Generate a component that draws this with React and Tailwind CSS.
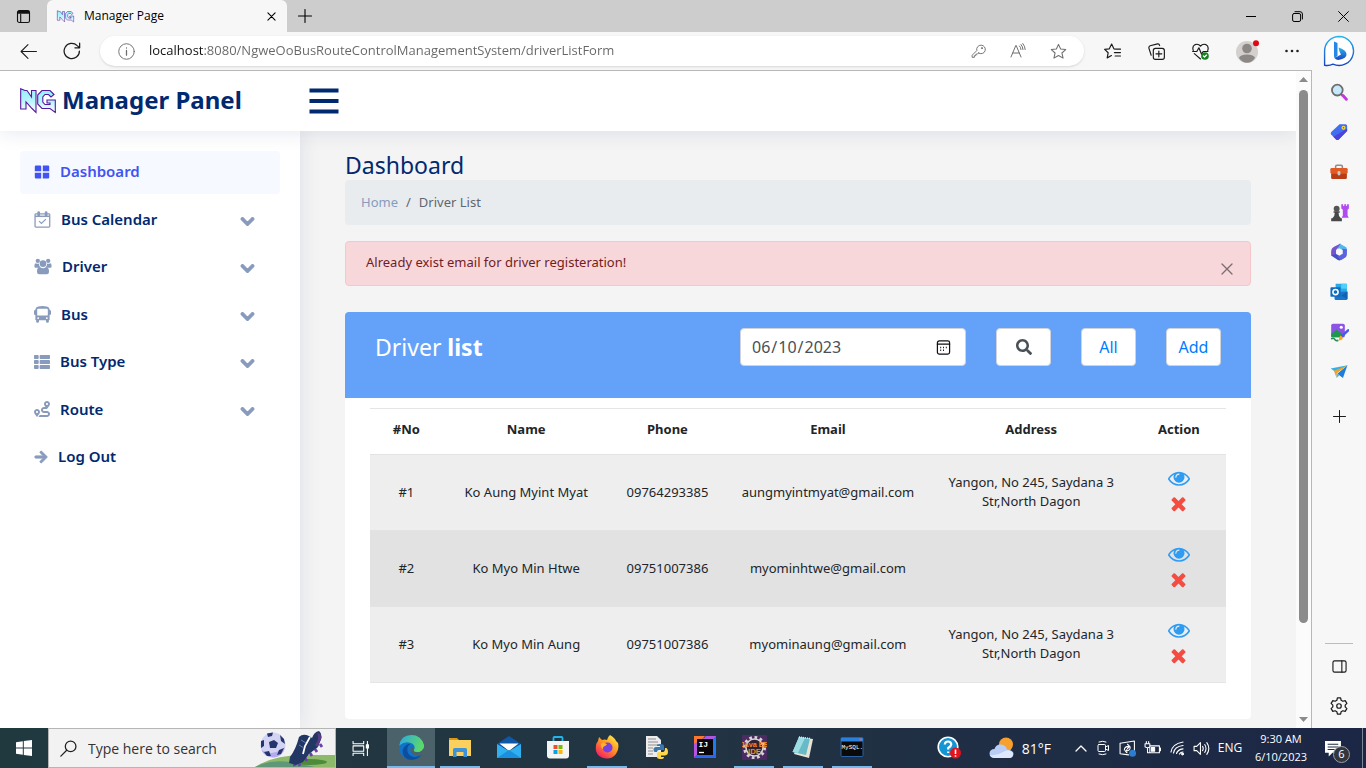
import React from "react";
import { FaThList, FaRoute, FaArrowRight, FaChevronDown, FaSearch } from "react-icons/fa";

const S = ({ size = 16, box = 16, children, w, h, ...rest }) => (
  <svg width={w || size} height={h || size} viewBox={`0 0 ${box} ${box}`} fill="none" aria-hidden="true" className="shrink-0" {...rest}>
    {children}
  </svg>
);

const Line = ({ size = 16, box = 16, d, sw = 1, color = "currentColor", children }) => (
  <S size={size} box={box} stroke={color} strokeWidth={sw} strokeLinecap="round" strokeLinejoin="round">
    {d && <path d={d} />}
    {children}
  </S>
);

function BrandMark({ id, width, height }) {
  return (
    <svg width={width} height={height} viewBox="0 0 36 26" aria-hidden="true" className="shrink-0 overflow-visible">
      <defs>
        <linearGradient id={id} x1="0" y1="0" x2="0" y2="1">
          <stop offset="0" stopColor="#8ff3fb" />
          <stop offset="0.5" stopColor="#b9f4fd" />
          <stop offset="1" stopColor="#ffffff" />
        </linearGradient>
      </defs>
      <path
        d="M.7.7 5 2.5H7L11.500 9V2.500H16V24.500L12 20.500 6 14V21H.7Z"
        fill={`url(#${id})`} stroke="#56189f" strokeWidth="1.1"
      />
      <path
        d="M34 6.500 30 2.500H22L17.700 7V16L22 20.500H30L35.300 24.500V12H27V15H30V16.500H25L22.800 14V9L25 6.500H28.500L31 9Z"
        fill={`url(#${id})`} stroke="#56189f" strokeWidth="1.1"
      />
    </svg>
  );
}

const STAR = "M8 1.3 L10 5.7 L14.8 6.2 L11.2 9.4 L12.3 14.2 L8 11.7 L3.7 14.2 L4.8 9.4 L1.2 6.2 L6 5.7 Z";

function TitleBar() {
  return (
    <header className="flex h-8 shrink-0 items-stretch bg-[#cdcdcd] text-black">
      <button aria-label="Tab actions" className="flex w-[47px] items-center justify-center">
        <S size={15}>
          <rect x="1.6" y="1.6" width="12.8" height="12.8" rx="2" stroke="#111" strokeWidth="1.2" />
          <path d="M1.6 5V3.4Q1.6 1.6 3.4 1.6H12.6Q14.4 1.6 14.4 3.4V5Z" fill="#111" />
          <path d="M5 5V14" stroke="#111" strokeWidth="1.2" />
        </S>
      </button>
      <div className="flex w-60 items-center rounded-t-md bg-[#f7f7f7] pr-2 pl-2.5">
        <BrandMark id="tabMark" width={17} height={15} />
        <span className="ml-2.5 flex-1 text-[12px]">Manager Page</span>
        <button aria-label="Close tab" className="flex size-4 items-center justify-center">
          <Line size={9} box={10} d="M1 1 9 9 M9 1 1 9" sw={1.2} />
        </button>
      </div>
      <button aria-label="New tab" className="flex w-9 items-center justify-center">
        <Line size={14} box={14} d="M7 0.5V13.5 M0.5 7H13.5" sw={1.1} />
      </button>
      <div className="flex-1" />
      <button aria-label="Minimize" className="flex w-[46px] items-center justify-center">
        <Line size={10} box={10} d="M0 5.5H10" />
      </button>
      <button aria-label="Restore" className="flex w-[46px] items-center justify-center">
        <Line size={11} box={11}>
          <rect x="0.6" y="2.5" width="8" height="8" rx="1.5" />
          <path d="M3 .7H8Q10.4.7 10.4 3V8" />
        </Line>
      </button>
      <button aria-label="Close window" className="flex w-[46px] items-center justify-center">
        <Line size={11} box={11} d="M.6.6 10.4 10.4 M10.4.6.6 10.4" />
      </button>
    </header>
  );
}

function BingIcon() {
  return (
    <S size={32} box={32}>
      <defs>
        <linearGradient id="bing" x1="0" y1="0" x2="0" y2="1">
          <stop offset="0" stopColor="#29b6ea" />
          <stop offset="1" stopColor="#1846c7" />
        </linearGradient>
      </defs>
      <path d="M16 1.5A14.5 14.5 0 1 1 10 29.2Q6 31 1.6 30.2V16A14.5 14.5 0 0 1 16 1.5Z" fill="#fff" stroke="url(#bing)" strokeWidth="1.4" />
      <path d="M11 6.5 14.5 8V20.5L12 23.5Q11 22.5 11 21Z" fill="#2588e9" />
      <path d="M15.5 12.5Q23 14.5 23.5 19T15.5 25Q12.8 25 11.6 23L18 19.6 16.6 16.8Z" fill="url(#bing)" />
    </S>
  );
}

function Toolbar() {
  return (
    <div className="flex h-[38px] shrink-0 items-center bg-[#f7f7f7] text-[#1b1b1b]">
      <button aria-label="Back" className="flex w-14 items-center justify-center">
        <Line size={17} d="M15.5 8H1 M7.5 1.5 1 8 7.5 14.5" />
      </button>
      <button aria-label="Refresh" className="flex w-8 items-center justify-center">
        <Line size={18} d="M14.6 8A6.8 6.8 0 1 1 12.6 3.2L14.8 5.2 M14.8 1V5.2H10.6" sw={1.1} />
      </button>
      <div className="ml-3 flex h-[30px] flex-1 items-center rounded-full bg-white pr-1.5 pl-4.5 text-[#6e6e6e] shadow-sm">
        <Line size={17} sw={0.9}>
          <circle cx="8" cy="8" r="7.3" />
          <path d="M8 7V11.5 M8 4.6V4.8" strokeWidth="1.2" />
        </Line>
        <input
          aria-label="Address"
          defaultValue="localhost:8080/NgweOoBusRouteControlManagementSystem/driverListForm"
          className="ml-3.5 min-w-0 flex-1 bg-[linear-gradient(90deg,#111_55px,#666_55px)] bg-clip-text text-[13px] text-transparent outline-none"
        />
        <button aria-label="Passwords" className="flex w-10 justify-center">
          <Line size={15}>
            <path d="M8 9.6 6.8 10.8H5.2V12.4H3.6V14.2H1.2V12L6.2 7A4.6 4.6 0 1 1 8 9.6Z" />
            <circle cx="11.6" cy="4.4" r=".6" />
          </Line>
        </button>
        <button aria-label="Read aloud" className="flex w-10 justify-center">
          <Line size={16} d="M1 14 5.8 2.5H6.2L11 14 M2.8 10H9.2 M9.5 3Q11 4.5 11 6.5 M11 1.5Q13 3.8 13 6.5 M12.8.5Q15.2 3.4 15.2 6.5" />
        </button>
        <button aria-label="Add to favorites" className="flex w-10 justify-center">
          <Line size={17} d={STAR} />
        </button>
      </div>
      <div className="flex items-center pl-1.5">
        <button aria-label="Favorites" className="flex w-11 justify-center">
          <Line size={17} d="M11.5 5.8 9.3 5.5 7.2 1 5 5.5.6 6 3.9 9.2 3 14 7 11.8 M10.5 5.8H15.5 M9.8 9H15.5 M10.5 12.2H15.5" sw={1.1} />
        </button>
        <button aria-label="Collections" className="flex w-11 justify-center">
          <Line size={17} sw={1.1}>
            <rect x="5" y="5" width="10.4" height="10.4" rx="2" />
            <path d="M10.2 7.5V13 M7.5 10.2H13 M3 11.5 .9 5Q.5 3.2 2 2.6L9 .8Q10.6.6 11 2.4" />
          </Line>
        </button>
        <button aria-label="Browser essentials" className="flex w-11 justify-center">
          <Line size={17} d="M1.2 7Q-.2 3 3 1.5 6 .4 8 3 10 .4 13 1.5 16.2 3 14.8 7 M.6 8H4.5L6.5 4.5 9 10.5 10.5 8H15 M2.2 10 8 15" sw={1.1}>
            <circle cx="12.2" cy="12.2" r="3.6" fill="#16821d" stroke="none" />
            <path d="M10.8 12.2 11.8 13.2 13.7 11.3" stroke="#fff" />
          </Line>
        </button>
        <button aria-label="Profile" className="flex w-[50px] justify-center">
          <S size={24} box={24}>
            <circle cx="12" cy="13" r="11" fill="#d3d0cd" />
            <circle cx="12" cy="9.5" r="4.8" fill="#8c8885" />
            <path d="M4 19Q5 15.5 12 15.5T20 19Q17 23.5 12 23.8 7 23.5 4 19Z" fill="#8c8885" />
            <circle cx="21" cy="4.3" r="3" fill="#e30613" />
          </S>
        </button>
        <button aria-label="Settings and more" className="flex w-10 justify-center">
          <S size={14} box={14}>
            <circle cx="1.5" cy="7" r="1.3" fill="#222" />
            <circle cx="7" cy="7" r="1.3" fill="#222" />
            <circle cx="12.5" cy="7" r="1.3" fill="#222" />
          </S>
        </button>
        <button aria-label="Bing chat" className="flex w-[54px] justify-center">
          <BingIcon />
        </button>
      </div>
    </div>
  );
}

const EDGE_TOOLS = [
  ["Search", (
    <S size={18}>
      <circle cx="6.5" cy="6.3" r="4.8" fill="#c5e9fb" stroke="#6d6d6d" strokeWidth="1.6" />
      <path d="M10 10 11.5 11.5" stroke="#666" strokeWidth="1.8" />
      <path d="M11.5 11.2 14.5 14.5" stroke="#c239e0" strokeWidth="2.6" strokeLinecap="round" />
    </S>
  )],
  ["Shopping", (
    <S size={18}>
      <path d="M8.5 1H13.8Q15.2 1 15.2 2.4V7L7.8 14.6Q6.6 15.5 5.4 14.6L1 10.2Q.2 9 1.1 8Z" fill="#416ff0" />
      <path d="M15.2 5V7L7.8 14.6Q6.6 15.5 5.4 14.6L3 12.2Z" fill="#4a43dc" />
      <circle cx="12" cy="4.2" r="1.8" fill="#f8d64e" /><circle cx="12" cy="4.2" r=".7" fill="#5b5bd0" />
    </S>
  )],
  ["Tools", (
    <S size={18}>
      <path d="M5 5V3.2Q5 2 6.2 2H9.8Q11 2 11 3.2V5" stroke="#8d8d8d" strokeWidth="1.4" />
      <rect x=".3" y="4.4" width="15.4" height="5" rx="1.2" fill="#e15a23" />
      <path d="M1 9H15V13Q15 14.3 13.8 14.3H2.2Q1 14.3 1 13Z" fill="#b93d14" />
      <rect x="6.7" y="7.2" width="2.6" height="3.8" rx="1.2" fill="#c9c9c9" />
    </S>
  )],
  ["Games", (
    <S size={19}>
      <path d="M9.5 1H11V2.5H12V1H13.6V2.5H14.4V1H15.9V4.6L14.8 5.6V10.5L15.8 12.5H9.8L10.8 10.5V5.6L9.5 4.6Z" fill="#b14bf0" />
      <circle cx="5.6" cy="4.8" r="2.5" fill="#555" />
      <path d="M3 7H8.2V8.3H7.2Q7 11 9.2 12.8H10V15.4H1V12.8H2Q4.200 11 4 8.300H3Z" fill="#484848" />
    </S>
  )],
  ["Microsoft 365", (
    <S size={18}>
      <path d="M8.5.5 14 3.5Q15 4 15 5.5V9L11 6.2 6 4.6Z" fill="#53b7ef" />
      <path d="M9.5.5 4 3.2Q1 4.800 1 7.500V11L5.500 12.500V6.500Z" fill="#7654cf" />
      <path d="M1 11 7 15.200Q8.200 16 9.500 15.200L14 12.500 10 9.500 5 9.800Z" fill="#454fc2" />
      <path d="M15 5.500V10.500Q15 12 13.500 12.800L9.500 15.300 6.500 12 11 9.500V5Z" fill="#5b62df" />
      <path d="M5.500 6.200 8.500 4.600 11.200 6.500V9.600L8.300 11.400 5.500 9.800Z" fill="#f7f7f7" />
    </S>
  )],
  ["Outlook", (
    <S size={18}>
      <path d="M5 .6H14Q15 .6 15 1.600V9H5Z" fill="#29a8ea" />
      <path d="M10 .6H15V5H10Z" fill="#52d0fb" />
      <path d="M4 8 15.500 7.500V14Q15.500 15 14.500 15H5Q4 15 4 14Z" fill="#1a74cb" />
      <path d="M10 11 15.500 7.500V14.500Z" fill="#1262ae" />
      <rect x=".4" y="3.700" width="9" height="8.600" rx=".8" fill="#0d6cbf" />
      <circle cx="4.900" cy="8" r="2.300" stroke="#fff" strokeWidth="1.400" />
    </S>
  )],
  ["Image creator", (
    <S size={19}>
      <rect x="1" y=".6" width="11.500" height="11.500" rx="1.500" fill="#8e53e5" />
      <circle cx="9.500" cy="3.600" r="1.300" fill="#fff" />
      <path d="M1 9 5.500 5.500 12 10.500V12H1Z" fill="#219653" />
      <path d="M1 13.500Q3 12 4 13.800T7 14.500" stroke="#23905a" strokeWidth="1.400" />
      <path d="M15.300 6.200 10 11" stroke="#4b5be6" strokeWidth="2.200" strokeLinecap="round" />
      <path d="M9 10.500 11.200 12.500Q10 15 7 14.800 8 13.500 7.600 12Z" fill="#f1a91e" />
    </S>
  )],
  ["Drop", (
    <S size={18}>
      <path d="M.6 4.800 15.500 2 5.500 8.500Z" fill="#2fb1ee" />
      <path d="M15.500 2 11.500 13.300 6.500 9.500Z" fill="#1c7ddb" />
      <path d="M3.500 6.800 15.500 2 6 9 5.800 13Z" fill="#f2a01d" />
      <path d="M6 9.200 8.500 10.800 5.800 13.300Z" fill="#3ec3f7" />
    </S>
  )],
];

function EdgeSidebar() {
  return (
    <aside aria-label="Browser sidebar" className="flex w-[55px] shrink-0 flex-col items-center border-l border-[#b8b8b8] bg-[#f7f7f7] pt-0.5 text-[#1b1b1b]">
      {EDGE_TOOLS.map(([name, icon]) => (
        <button key={name} aria-label={name} className="flex h-10 w-full items-center justify-center">{icon}</button>
      ))}
      <button aria-label="Customize sidebar" className="mt-1 flex h-10 w-full items-center justify-center">
        <Line size={13} box={13} d="M6.500.5V12.500 M.5 6.500H12.500" />
      </button>
      <div className="flex-1" />
      <div className="h-px w-7 bg-[#bcbcbc]" />
      <button aria-label="Toggle sidebar" className="mt-0.5 flex h-10 w-full items-center justify-center">
        <Line size={15} sw={1.200}>
          <rect x="1" y="2" width="14" height="12" rx="1.800" />
          <path d="M10.500 2V14" />
        </Line>
      </button>
      <button aria-label="Sidebar settings" className="mb-0.5 flex h-10 w-full items-center justify-center">
        <Line size={18} sw={1.100}>
          <circle cx="8" cy="8" r="2" />
          <path d="M6.600.8H9.400L9.900 2.900 11.500 3.800 13.500 3.200 15 5.700 13.500 7.200V8.800L15 10.300 13.500 12.800 11.500 12.200 9.900 13.100 9.400 15.200H6.600L6.100 13.100 4.500 12.200 2.500 12.800 1 10.300 2.500 8.800V7.200L1 5.700 2.500 3.200 4.500 3.800 6.100 2.900Z" />
        </Line>
      </button>
    </aside>
  );
}

const NAV = [
  { label: "Dashboard", active: true, icon: (
    <S size={16}><path d="M2 1.500H6.200Q7.200 1.500 7.200 2.500V7.200H.8V2.500Q.8 1.500 2 1.500ZM8.800 1.500H14.200Q15.200 1.500 15.200 2.500V7.200H8.800ZM.8 8.700H7.200V14.500H2Q.8 14.500.8 13.500ZM8.800 8.700H15.200V13.500Q15.200 14.500 14.200 14.500H8.800Z" fill="currentColor" /></S>
  ) },
  { label: "Bus Calendar", arrow: true, icon: (
    <S size={17} stroke="currentColor">
      <rect x="1" y="2.800" width="13.800" height="12.400" rx=".8" strokeWidth="1.200" />
      <path d="M1 5H14.800" strokeWidth="1.400" />
      <path d="M4.400 1.500V4 M11.400 1.500V4" strokeWidth="2.600" strokeLinecap="round" />
      <path d="M4.800 9.500 7 11.700 11.200 7.600" strokeWidth="1.100" />
    </S>
  ) },
  { label: "Driver", arrow: true, icon: (
    <S w={18} h={17} box={18}>
      <g fill="currentColor">
        <circle cx="3.500" cy="3" r="2.300" /><circle cx="14.500" cy="3" r="2.300" /><circle cx="9" cy="6" r="3.500" />
        <path d="M0 9.500V7.500Q0 5.500 1.500 5.500 3 6.500 4.700 5.700 4.500 8 6 9.500L4.500 10.300H1Q0 10.300 0 9.500ZM18 9.500V7.500Q18 5.500 16.500 5.500 15 6.500 13.300 5.700 13.500 8 12 9.500L13.500 10.300H17Q18 10.300 18 9.500Z" />
        <path d="M2.600 14.500Q2.600 9.500 5.800 9.500 9 12 12.200 9.500 15.400 9.500 15.400 14.500 15.400 17.200 13 17.200H5Q2.600 17.200 2.600 14.500Z" />
      </g>
    </S>
  ) },
  { label: "Bus", arrow: true, icon: (
    <S size={17}>
      <path fillRule="evenodd" fill="currentColor" d="M4 .4Q8-.4 12 .4 14.500.800 14.700 3V3.800Q16 3.800 16 5V7.500Q16 8.500 14.700 8.500V13.200H14V14.800Q14 15.800 12.600 15.800T11.300 14.800V13.500H4.700V14.800Q4.700 15.800 3.400 15.800T2 14.800V13.200H1.300V8.500Q0 8.500 0 7.500V5Q0 3.800 1.300 3.800V3Q1.500.800 4 .4ZM3.800 2.600Q3 2.600 3 3.500V8.200Q3 9 3.800 9H12.200Q13 9 13 8.200V3.500Q13 2.600 12.200 2.600ZM3.900 10.500A.9.9 0 1 0 3.900 12.300.9.9 0 0 0 3.900 10.500ZM12.100 10.500A.9.900 0 1 0 12.100 12.300.9.900 0 0 0 12.100 10.500Z" />
    </S>
  ) },
  { label: "Bus Type", arrow: true, icon: <FaThList size={16} aria-hidden="true" /> },
  { label: "Route", arrow: true, icon: <FaRoute size={16} aria-hidden="true" /> },
  { label: "Log Out", icon: <FaArrowRight size={14} stroke="currentColor" strokeWidth={36} aria-hidden="true" /> },
];

function Sidebar() {
  return (
    <nav aria-label="Main" className="relative z-0 w-[300px] shrink-0 bg-white px-5 py-5 shadow-[0_0_20px_rgba(1,41,112,0.1)]">
      <ul className="flex h-[328px] flex-col justify-between text-[15px] font-semibold">
        {NAV.map((item) => (
          <li key={item.label}>
            <a
              href={"#" + item.label.replace(" ", "-").toLowerCase()}
              className={
                item.active
                  ? "flex h-[43px] items-center rounded bg-[#f6f9ff] pr-[25px] pb-0.5 pl-3.5 text-[#4154f1]"
                  : "flex h-[43px] items-center rounded pr-[25px] pb-0.5 pl-3.5 text-[#012970]"
              }
            >
              <span className={item.active ? "mr-2.5" : "mr-2.5 text-[#899bbd]"}>{item.icon}</span>
              <span className="flex-1">{item.label}</span>
              {item.arrow && <FaChevronDown size={15} stroke="currentColor" strokeWidth={44} className="mt-1 text-[#899bbd]" aria-hidden="true" />}
            </a>
          </li>
        ))}
      </ul>
    </nav>
  );
}

const EYE =
  "M1664 960q-152-236-381-353 61 104 61 225 0 185-131.500 316.500t-316.500 131.500-316.500-131.500-131.500-316.500q0-121 61-225-229 117-381 353 133 205 333.500 326.500t434.500 121.500 434.500-121.500 333.500-326.500zm-720-384q0-20-14-34t-34-14q-125 0-214.500 89.500t-89.500 214.500q0 20 14 34t34 14 34-14 14-34q0-86 61-147t147-61q20 0 34-14t14-34zm848 384q0 34-20 69-140 230-376.500 368.500t-499.500 138.500-499.500-139-376.500-368q-20-35-20-69t20-69q140-229 376.500-368t499.500-139 499.500 139 376.500 368q20 35 20 69z";
const TIMES =
  "M1490 1322q0 40-28 68l-136 136q-28 28-68 28t-68-28l-294-294-294 294q-28 28-68 28t-68-28l-136-136q-28-28-28-68t28-68l294-294-294-294q-28-28-28-68t28-68l136-136q28-28 68-28t68 28l294 294 294-294q28-28 68-28t68 28l136 136q28 28 28 68t-28 68l-294 294 294 294q28 28 28 68z";

const DRIVERS = [
  { no: "#1", name: "Ko Aung Myint Myat", phone: "09764293385", email: "aungmyintmyat@gmail.com", address: "Yangon, No 245, Saydana 3 Str,North Dagon" },
  { no: "#2", name: "Ko Myo Min Htwe", phone: "09751007386", email: "myominhtwe@gmail.com", address: "" },
  { no: "#3", name: "Ko Myo Min Aung", phone: "09751007386", email: "myominaung@gmail.com", address: "Yangon, No 245, Saydana 3 Str,North Dagon" },
];

const BTN = "flex h-[38px] w-[55px] items-center justify-center rounded border border-[#ced4da] bg-white text-[16px] text-[#007bff]";

function DriverCard() {
  return (
    <section className="mt-[26px] rounded bg-white pb-9">
      <div className="flex h-[86px] items-start rounded-t bg-[#64a1f9] px-[30px] pt-4">
        <h2 className="flex-1 text-[23px] leading-[38px] text-white">
          Driver <b>list</b>
        </h2>
        <div className="flex gap-[30px]">
          <div className="relative w-[226px]">
            <input
              type="date"
              aria-label="Date"
              defaultValue="2023-06-10"
              className="h-[38px] w-full rounded border border-[#ced4da] bg-white pr-3 pl-2.5 text-[16px] text-[#495057] [&::-webkit-calendar-picker-indicator]:opacity-0"
            />
            <span className="pointer-events-none absolute top-3 right-[15px]">
              <Line size={15} color="#111" sw={1.3}>
                <rect x="1.500" y="1" width="13" height="14" rx="2" />
                <path d="M1.500 4.500H14.500" />
                <path d="M4.500 8H5.500 M7.500 8H8.500 M10.500 8H11.500 M4.500 11H5.500 M7.500 11H8.500" strokeWidth="1.700" strokeLinecap="butt" />
              </Line>
            </span>
          </div>
          <button aria-label="Search drivers" className={BTN}>
            <FaSearch size={16} className="text-[#495057]" aria-hidden="true" />
          </button>
          <button className={BTN}>All</button>
          <button className={BTN}>Add</button>
        </div>
      </div>
      <div className="px-[25px] pt-2.5">
        <table className="w-full table-fixed border-y border-[#e5e5e5] text-center text-[13px] leading-[19px] text-[#212529]">
          <colgroup>
            <col className="w-[8.500%]" />
            <col className="w-[19.500%]" />
            <col className="w-[13.500%]" />
            <col className="w-[24%]" />
            <col className="w-[23.500%]" />
            <col className="w-[11%]" />
          </colgroup>
          <thead>
            <tr className="h-[46px] font-bold">
              {["#No", "Name", "Phone", "Email", "Address", "Action"].map((h) => (
                <th key={h} className="pb-1">{h}</th>
              ))}
            </tr>
          </thead>
          <tbody>
            {DRIVERS.map((d) => (
              <tr key={d.no} className="h-[76px] border-t border-[#e3e3e3] bg-[#eeeeee] even:bg-[#e2e2e2]">
                <td>{d.no}</td>
                <td>{d.name}</td>
                <td>{d.phone}</td>
                <td>{d.email}</td>
                <td className="px-3 pb-0.5">{d.address}</td>
                <td className="pb-1">
                  <div className="flex flex-col items-center gap-1">
                    <button aria-label={"View " + d.name} className="text-[#2f9cf3]">
                      <S size={22} box={1792}><path d={EYE} fill="currentColor" /></S>
                    </button>
                    <button aria-label={"Delete " + d.name} className="text-[#f44c40]">
                      <S size={21} box={1792}><path d={TIMES} fill="currentColor" /></S>
                    </button>
                  </div>
                </td>
              </tr>
            ))}
          </tbody>
        </table>
      </div>
    </section>
  );
}

function Page() {
  return (
    <div className="flex min-w-0 flex-1 flex-col overflow-hidden bg-[#f4f4f4] font-['Noto_Sans',sans-serif]">
      <div className="relative z-10 flex h-[60px] shrink-0 items-center bg-white pl-5 text-[#012970] shadow-[0_2px_20px_rgba(1,41,112,0.1)]">
        <a href="#home" className="flex w-[289px] items-center gap-1.5">
          <BrandMark id="pageMark" width={36} height={26} />
          <span className="pb-0.5 text-[24px] font-bold">Manager Panel</span>
        </a>
        <button aria-label="Toggle menu">
          <S size={30} box={30}>
            <path d="M2.500 4.500H27.500 M2.500 15H27.500 M2.500 25.500H27.500" stroke="currentColor" strokeWidth="4" strokeLinecap="square" />
          </S>
        </button>
      </div>
      <div className="flex min-h-0 flex-1">
        <Sidebar />
        <main className="min-w-0 flex-1 px-[45px] pt-5">
          <h1 className="text-[23px] leading-[29px] text-[#012970]">Dashboard</h1>
          <ol className="flex h-[45px] items-center gap-2 rounded bg-[#e8ecef] px-4 text-[13px] text-[#5f6770]">
            <li><a href="#home" className="text-[#899bbd]">Home</a></li>
            <li aria-hidden="true">/</li>
            <li>Driver List</li>
          </ol>
          <div role="alert" className="mt-4 flex h-[45px] items-center justify-between rounded border border-[#f5c6cb] bg-[#f8d7da] pr-[15px] pb-0.5 pl-5 text-[13px] text-[#721c24]">
            <span>Already exist email for driver registeration!</span>
            <button aria-label="Dismiss" className="mt-3 flex size-4 items-center justify-center text-[#7b6c6d]">
              <Line size={12} box={12} d="M1 1 11 11 M11 1 1 11" sw={1.300} />
            </button>
          </div>
          <DriverCard />
        </main>
      </div>
    </div>
  );
}

function Scrollbar() {
  return (
    <div aria-hidden="true" className="flex w-[15px] shrink-0 flex-col items-center bg-[#fbfbfb] py-1">
      <S size={9} box={9}><path d="M4.500 2 9 7H0Z" fill="#8b8b8b" /></S>
      <div className="mt-1.5 w-[9px] flex-[534] rounded-full bg-[#8b8b8b]" />
      <div className="flex-[92]" />
      <S size={9} box={9}><path d="M4.500 7 9 2H0Z" fill="#8b8b8b" /></S>
    </div>
  );
}

const APPS = [
  { name: "Microsoft Edge", active: true, open: true, icon: (
    <S size={25} box={24}>
      <defs>
        <linearGradient id="edgeTop" x1="0" y1="0" x2="1" y2="0.3">
          <stop offset="0" stopColor="#2aa8e6" /><stop offset="1" stopColor="#5bd86a" />
        </linearGradient>
      </defs>
      <circle cx="12" cy="12" r="12" fill="#1272c8" />
      <path d="M.2 10Q2 0 12 0 21 0 24 9.500 24.500 15 19 16.500 14 17 14 14.500 16.500 11.500 13 8.500 7 5 .2 10Z" fill="url(#edgeTop)" />
      <path d="M8 13Q7.500 20 14.500 21 19 21.500 22 18.500 18 24 12 24 3 23 3.500 15 5 9 11 8.500 8.500 10 8 13Z" fill="#0c4f9e" />
      <path d="M14 14.500Q14 17 19 16.500 22 16 23.500 13L26 16 22 19Q16 21 12.500 18 9.500 14.500 12 11 15 12 14 14.500Z" fill="#4a626c" />
    </S>
  ) },
  { name: "File Explorer", open: true, icon: (
    <S size={24} box={24}>
      <path d="M1 3H9L11 5H1Z" fill="#d99a17" />
      <path d="M1 5H23V21H1Z" fill="#fbd05c" />
      <path d="M5 14.500Q5 13 6.500 13H17.500Q19 13 19 14.500V22H15.500V17H8.500V22H5Z" fill="#3d93d8" />
    </S>
  ) },
  { name: "Mail", icon: (
    <S size={24} box={24}>
      <path d="M0 9 12 1 24 9V12H0Z" fill="#0f58a8" />
      <path d="M2.500 8.500H21.500L12 16Z" fill="#fff" />
      <path d="M0 9 12 16 24 9V23H0Z" fill="#30b0f0" /><path d="M0 23 12 15 24 23Z" fill="#1a8fdd" />
    </S>
  ) },
  { name: "Microsoft Store", icon: (
    <S size={24} box={24}>
      <path d="M7.500 6V3Q7.500 2 8.500 2H15.500Q16.500 2 16.500 3V6" stroke="#25b4ea" strokeWidth="1.800" />
      <path d="M1 6H23V20.500Q23 23.500 20 23.500H4Q1 23.500 1 20.500Z" fill="#f4f4f4" />
      <path d="M7.500 10H11.500V14H7.500Z" fill="#f04e28" /><path d="M12.500 10H16.500V14H12.500Z" fill="#7cb902" />
      <path d="M7.500 15H11.500V19H7.500Z" fill="#05a3ec" /><path d="M12.500 15H16.500V19H12.500Z" fill="#fdb702" />
    </S>
  ) },
  { name: "Firefox", open: true, icon: (
    <S size={24} box={24}>
      <defs>
        <linearGradient id="fox" x1="0.900" y1="0" x2="0.200" y2="1">
          <stop offset="0" stopColor="#fff14a" /><stop offset="0.450" stopColor="#ff9a1f" /><stop offset="1" stopColor="#f5156b" />
        </linearGradient>
      </defs>
      <path d="M15 0Q20 3 21 6L23 8Q24.500 14 21 19 17 24 11 23.500 3 23 1 16 0 9 3 6L4 2 7 5Q10 4 12 5 13 1.500 15 0Z" fill="url(#fox)" />
      <circle cx="12.500" cy="12.500" r="5" fill="#7a3fe0" />
      <path d="M6 9Q9 6.500 12 9.500L10 11Q7 12 8.500 14.500 5 12 6 9Z" fill="#ffb32b" />
    </S>
  ) },
  { name: "Python file", icon: (
    <S size={24} box={24}>
      <path d="M2 1H13L17 5V22H2Z" fill="#ededed" />
      <path d="M4 4H12 M4 7H14 M4 10H14 M4 13H9 M4 16H9 M4 19H9" stroke="#8d8d8d" />
      <path d="M16 9Q20 9 20 11V15H15Q13 15 13 17H11Q9.500 17 9.500 14.500T12 12H16V11H13V10Q13 9 16 9Z" fill="#3b77ab" />
      <path d="M17 24Q13 24 13 22V18.500Q13 17 15 17H19Q21 17 21 13H22.500Q24 14 24 17T21 20.500H17V22H20Q20 24 17 24Z" fill="#ffd748" />
    </S>
  ) },
  { name: "IntelliJ IDEA", icon: (
    <S size={24} box={24}>
      <path d="M1 1H12L1 14Z" fill="#f9772e" /><path d="M12 1H23V23H12Z" fill="#1d7bf0" />
      <path d="M1 9 14 1H23L1 23Z" fill="#b454e0" /><path d="M1 23 12 11 23 20V23Z" fill="#2b67f0" />
      <rect x="4" y="4" width="16" height="16" fill="#090509" />
      <text x="5.500" y="12" fontSize="8" fontWeight="700" fill="#fff" fontFamily="Liberation Mono, monospace">IJ</text>
      <path d="M6 17.500H11" stroke="#fff" strokeWidth="1.300" />
    </S>
  ) },
  { name: "Java EE IDE", open: true, icon: (
    <S size={25} box={24}>
      <rect width="24" height="24" rx="1" fill="#4a2c63" />
      <circle cx="12" cy="12" r="9.800" stroke="#d9d5d5" strokeWidth="2.600" strokeDasharray="2.600 2.500" />
      <circle cx="12" cy="12" r="8.200" stroke="#d9d5d5" strokeWidth="1.500" fill="#312331" />
      <text x="12" y="11.500" textAnchor="middle" fontSize="7" fontWeight="700" fill="#f08b2c" fontFamily="Liberation Sans, sans-serif">Java EE</text>
      <text x="12" y="18.500" textAnchor="middle" fontSize="7.500" fontWeight="700" fill="#f08b2c" fontFamily="Liberation Sans, sans-serif">IDE</text>
    </S>
  ) },
  { name: "Notepad", open: true, icon: (
    <S size={24} box={24}>
      <path d="M8 2 22 4 18 23 3 19Z" fill="#e6e2d5" />
      <path d="M8 2 19 3.500 15 20 1.500 17Z" fill="#67bac6" />
      <path d="M8 2 14 3 7 18 1.500 17Z" fill="#9bdde2" />
      <path d="M8 2 19 3.500" stroke="#d7f0f3" strokeWidth="1.600" strokeDasharray="1 1" />
    </S>
  ) },
  { name: "MySQL command line", open: true, icon: (
    <S size={24} box={24}>
      <rect x="1" y="2.500" width="22" height="19" rx="1" fill="#0a0a0a" stroke="#2b62a5" strokeWidth="1" />
      <path d="M1 3H23V6.500H1Z" fill="#2a80dd" /><path d="M19.500 3.500H22V5.500H19.500Z" fill="#e36251" />
      <text x="1.500" y="13.500" fontSize="6" fill="#fff" fontFamily="Liberation Mono, monospace">MySQL.</text>
    </S>
  ) },
];

function SportsArt() {
  return (
    <svg width="80" height="38" viewBox="0 0 80 38" aria-hidden="true" className="shrink-0">
      <path d="M0 38Q18 26 50 26T80 26V38Z" fill="#8cb96a" />
      <path d="M0 38Q15 30 35 33L60 38Z" fill="#5f9878" />
      <ellipse cx="54" cy="33" rx="18" ry="3" fill="#4d8b3b" />
      <circle cx="18" cy="16" r="12.500" fill="#d3d4f4" />
      <path d="M6.500 21Q17 28 30 18 28 28 18 28.500 9 28 6.500 21Z" fill="#b3acec" />
      <path d="M14 13 19 11 23 14 21 19 15 19ZM12 4.500 18 3.500 17 7 13 8ZM25 6 29 10 30 15 26 12ZM6 12 9 11 9 17 6 19ZM9 23 14 22 16 27 12 27ZM24 21 29 19 26 25 22 26Z" fill="#25356f" />
      <path d="M44 35 45 37 M39 35 40 37 M50 29 52 32 M55 24 57 27 M60 20 62 23 M65 15 67 18" stroke="#6b3fae" strokeWidth="2.800" fill="none" />
      <path d="M44 8Q48 4 54 7L57 9Q59 3 64 2 67 4 66.500 9L63 18 54 25 48 33 41 36 34 34 35 28Q41 20 44 8Z" fill="#223764" />
      <path d="M62 4Q67 4 66 10L62.500 18 60 16Q65 10 62 4Z" fill="#5d3a86" />
      <path d="M55 8 50 17 48 25" stroke="#fff" strokeWidth="1.800" fill="none" />
      <path d="M46 11 51 14 M44 16 49 19" stroke="#5f7db5" strokeWidth="1" fill="none" />
    </svg>
  );
}

function Taskbar() {
  return (
    <footer className="flex h-10 shrink-0 items-stretch bg-gradient-to-r from-[#20393f] via-[#223443] to-[#1c2645] font-['Open_Sans',sans-serif] text-white">
      <button aria-label="Start" className="flex w-12 items-center justify-center">
        <S size={16}>
          <path d="M0 2.300 6.800 1.300V7.500H0ZM7.800 1.100 16 0V7.500H7.800ZM0 8.500H6.800V14.700L0 13.700ZM7.800 8.500H16V16L7.800 14.900Z" fill="#fff" />
        </S>
      </button>
      <label className="flex w-72 items-center border border-[#b5b5b5] bg-[#f2f2f2] pl-[11px] text-[#222]">
        <Line size={17} sw={1.200}><circle cx="10" cy="6" r="5" /><path d="M6.300 9.700.8 15.200" /></Line>
        <input aria-label="Search" placeholder="Type here to search" className="ml-[11px] min-w-0 flex-1 text-[14px] outline-none placeholder:text-[#333]" />
        <SportsArt />
      </label>
      <button aria-label="Task view" className="flex w-12 items-center justify-center">
        <Line size={17}>
          <path d="M1 1V3.500H11V1 M1 15V12.500H11V15 M14.500 1V15" strokeLinecap="butt" />
          <rect x="1" y="5.500" width="10" height="5" />
          <path d="M13.500 4.500H15.500V7.500H13.500Z" fill="#fff" />
        </Line>
      </button>
      <div className="ml-[3px] flex gap-px">
        {APPS.map((a) => (
          <button
            key={a.name}
            aria-label={a.name}
            className={a.active ? "flex w-12 flex-col items-center bg-[#4c626b]" : "flex w-12 flex-col items-center"}
          >
            <span className="flex flex-1 items-center">{a.icon}</span>
            <span className={a.active ? "h-0.5 w-full bg-[#76b9ed]" : a.open ? "h-0.5 w-10 bg-[#76b9ed]" : "h-0.5 w-10"} />
          </button>
        ))}
      </div>
      <div className="flex-1" />
      <button aria-label="Get help" className="flex w-12 items-center justify-center">
        <S size={24} box={24}>
          <circle cx="11" cy="11" r="9.800" fill="#1495d3" stroke="#fff" strokeWidth="1.600" />
          <path d="M7.800 8.500Q8 5.500 11 5.500T14.300 8.300Q14.300 10 11.200 12V13.500 M11.200 15.500V17" stroke="#fff" strokeWidth="2.200" />
          <circle cx="18.500" cy="17" r="5.500" fill="#e3131b" />
          <path d="M18.500 13.500V18 M18.500 19.300V20.800" stroke="#fff" strokeWidth="1.600" />
        </S>
      </button>
      <button className="ml-4 flex items-center gap-2 text-[14px]">
        <S size={25} box={25}>
          <circle cx="17" cy="8.500" r="7" fill="#f6a02e" />
          <path d="M5.500 22Q.5 21.500.5 17.500.8 13 5.500 13 7 8 12 8.500 17 9 18 13.500 24.500 14 24.500 18 24 22 20 22Z" fill="#b7cdf5" />
          <path d="M1 19Q8 20 14 16T24 17Q24.500 22 20 22H5.500Q2 22 1 19Z" fill="#dfe7fb" />
        </S>
        81°F
      </button>
      <div className="ml-6 flex items-center gap-2">
        <Line size={12} box={12} d="M1 9 6 4 11 9" sw={1.300} />
        <Line size={16}>
          <rect x="3" y="4.500" width="7.500" height="7" rx="1" /><path d="M10.500 7 13.500 5.500V10.500L10.500 9 M4 2Q7.500.5 11 2 M4 14Q7.500 15.500 11 14" />
        </Line>
        <Line size={17}>
          <path d="M1 3 14.500 1V11 M1 3V13L9 14 M5 9.500Q5 6 9.500 6 M8 4 10 6 8 8 M10.500 6.500Q11 10 6 10.500 M7.500 9 6 10.500 7.500 12" />
          <circle cx="12.800" cy="12.500" r="3.300" fill="#2c7cd1" stroke="none" />
        </Line>
        <Line size={17}>
          <path d="M5.500 5.500H14.500V12H5.500Z M14.500 7.500H15.500V10H14.500 M1 3.500H5.500V6.500Q3.300 8 1 6.500Z M2.200 3.500V1.500 M4.400 3.500V1.500 M3.300 7.500V12H5.500" />
          <path d="M7 7H10V10.500H7Z" fill="#fff" />
        </Line>
        <Line size={16}>
          <path d="M2 12Q3 4 14 2 M4.500 13Q5.500 6.500 14 5.500 M7.500 13.500Q8.500 9.500 14 8.800 M10.500 14Q11.500 12 14 12" strokeWidth="1.200" />
          <circle cx="13.500" cy="14" r="1" fill="#fff" />
        </Line>
        <Line size={17} d="M1 6H3.500L7 2.500V13.500L3.500 10H1Z M9 6Q10.300 8 9 10 M11 4.300Q13.500 8 11 11.700 M13 2.500Q16.800 8 13 13.500" />
      </div>
      <button className="w-10 text-[12px]">ENG</button>
      <button className="flex w-[62px] flex-col items-center justify-center text-[11px] leading-[18px]">
        <time>9:30 AM</time>
        <span>6/10/2023</span>
      </button>
      <button aria-label="Notifications" className="relative flex w-[50px] items-center justify-center pr-2">
        <S size={17}>
          <path d="M0 1H15V12H7L3.500 15.500V12H0Z" fill="#fff" />
          <path d="M2.500 4H12.500 M2.500 6.500H12.500 M2.500 9H9" stroke="#1f2b42" />
        </S>
        <span className="absolute top-[18px] right-3 flex size-[17px] items-center justify-center rounded-full border border-[#9aa0a8] bg-[#33373d] text-[11px]">6</span>
      </button>
      <div className="mr-[3px] w-px bg-[#7d8698]" />
    </footer>
  );
}

export default function App() {
  return (
    <div className="flex h-screen flex-col overflow-hidden bg-[#f7f7f7] font-['Open_Sans',sans-serif]">
      <TitleBar />
      <Toolbar />
      <div className="flex min-h-0 flex-1">
        <div className="flex min-w-0 flex-1 border-t border-[#b8b8b8]">
          <Page />
          <Scrollbar />
        </div>
        <EdgeSidebar />
      </div>
      <Taskbar />
    </div>
  );
}
